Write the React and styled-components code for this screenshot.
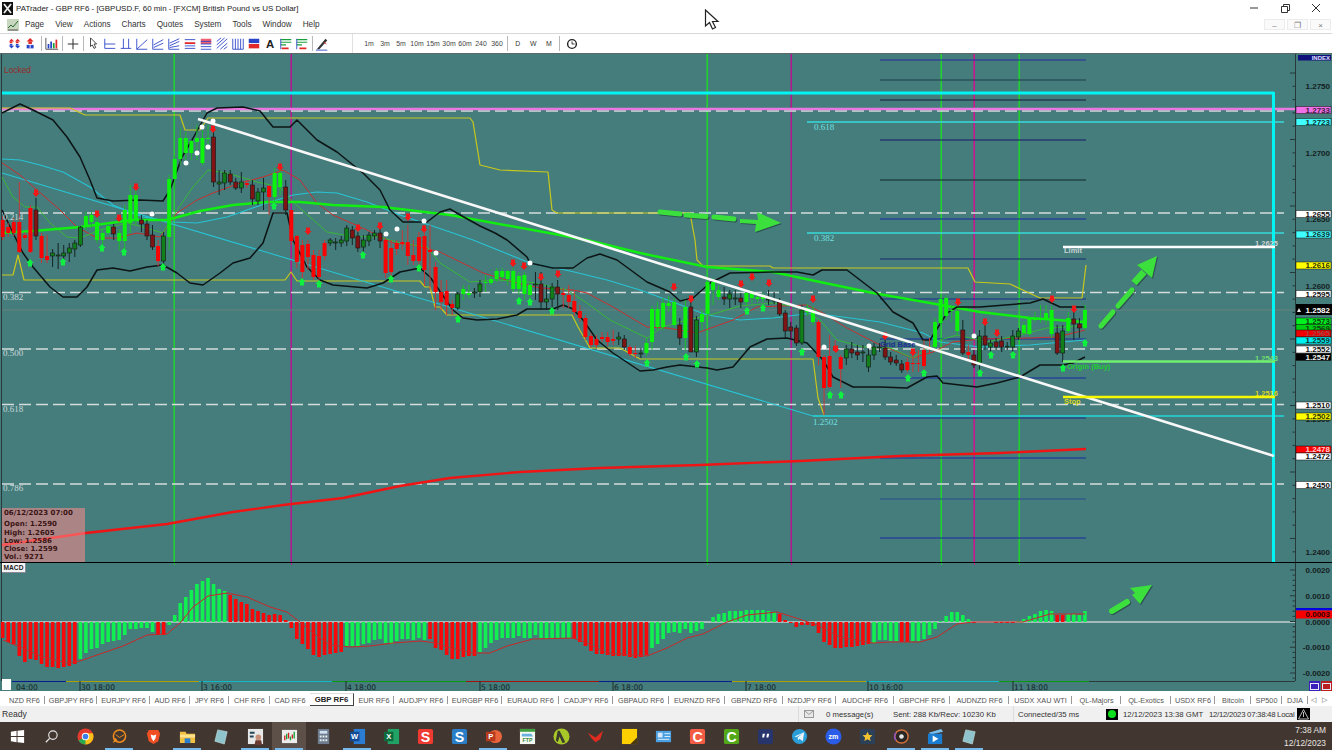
import React from 'react';
import styled, {createGlobalStyle} from 'styled-components';

const GlobalStyle = createGlobalStyle`
  html, body {
    margin: 0;
    padding: 0;
    width: 1332px;
    height: 750px;
    overflow: hidden;
    background: #fff;
    font-family: "Liberation Sans", Arial, sans-serif;
  }
`

const TEAL = '#457c7c';

// pixel coords of the drawn series, viewBox of the svg == page coords
const candles = [
  ['R',220,237,216,240],['R',227,233,223,237],['R',222,233,218,236],['R',222,252,182,253],['R',235,238,232,240],
  ['R',208,252,205,253],['r',210,236,198,240],['R',236,258,233,263],['R',256,260,235,263],['g',253,256,249,267],
  ['g',255,256,243,269],['g',253,256,245,263],['g',248,253,243,262],['g',243,249,240,257],['g',227,245,226,247],
  ['G',216,227,212,230],['G',215,222,212,228],['G',222,240,218,243],['G',233,240,230,245],['G',226,233,224,235],
  ['r',227,234,224,240],['G',233,241,229,250],['G',210,241,205,251],['G',195,223,185,233],['G',195,220,190,225],
  ['r',220,224,215,232],['r',224,236,220,240],['r',235,247,225,250],['R',246,261,240,266],['g',236,261,232,265],
  ['G',179,237,175,250],['G',159,179,155,190],['G',138,159,128,165],['G',138,153,132,160],['G',141,153,140,160],
  ['G',138,142,125,160],['G',138,163,130,165],['G',138,139,125,150],['r',137,182,130,187],['g',182,184,170,195],
  ['g',173,183,170,190],['r',174,182,170,185],['r',182,188,178,190],['g',182,188,172,193],['R',183,185,180,188],
  ['r',185,199,180,205],['g',192,201,188,205],['g',188,192,178,210],['R',186,197,185,215],['G',173,197,168,203],
  ['G',173,187,170,195],['r',187,210,180,215],['R',210,241,210,245],['R',236,262,235,268],['R',245,272,240,278],
  ['R',244,257,240,270],['R',255,277,250,280],['R',256,277,250,280],['R',243,256,240,260],['g',240,243,238,246],
  ['g',242,243,238,250],['g',240,243,236,247],['g',228,241,225,246],['r',230,238,226,245],['r',236,248,232,252],
  ['g',240,247,235,252],['g',235,241,232,246],['g',233,236,230,240],['r',233,241,228,248],['R',240,273,238,278],
  ['R',248,272,240,278],['R',243,249,240,255],['R',242,244,230,250],['R',242,256,225,265],['R',255,261,240,265],
  ['R',237,261,232,265],['R',236,270,225,286],['R',250,252,225,290],['R',267,292,262,310],['R',292,302,280,310],
  ['R',291,305,280,315],['R',304,308,300,315],['g',294,308,292,310],['G',289,294,285,300],['G',293,295,285,298],
  ['g',292,293,288,298],['g',284,292,280,297],['G',282,283,275,292],['G',279,283,276,285],['G',271,279,268,282],
  ['G',271,277,268,280],['G',271,279,270,285],['G',271,289,268,292],['G',276,289,272,295],['G',275,294,272,300],
  ['G',285,295,282,300],['g',284,285,272,300],['r',284,302,272,310],['g',299,302,285,310],['g',287,299,283,310],
  ['r',287,294,280,310],['R',293,295,288,308],['R',295,302,285,308],['R',301,312,290,316],['R',311,318,305,322],
  ['R',318,337,315,340],['R',336,345,333,348],['R',339,345,335,348],['R',337,339,332,342],['R',337,342,332,346],
  ['R',339,341,330,345],['g',337,339,332,345],['r',339,347,335,350],['R',347,354,345,356],['R',353,354,346,358],
  ['g',353,354,348,358],['G',343,353,338,356],['G',309,342,306,350],['G',309,327,302,330],['G',303,327,298,330],
  ['G',303,306,296,312],['G',302,325,298,328],['r',325,338,318,345],['G',307,338,300,350],['r',307,352,300,352],
  ['g',320,352,316,357],['G',314,322,310,330],['G',282,314,280,316],['G',282,290,278,305],['G',290,297,285,300],
  ['r',297,299,287,305],['g',294,299,290,308],['g',298,299,290,305],['r',298,302,293,308],['G',293,302,290,305],
  ['G',293,298,290,303],['G',297,299,293,302],['G',297,299,293,302],['g',299,300,290,305],['g',300,301,292,304],
  ['r',302,314,298,316],['r',313,331,310,338],['r',327,331,322,338],['r',328,343,325,346],['g',310,343,305,345],
  ['G',308,312,304,316],['G',310,322,306,325],['R',322,357,320,365],['R',357,388,355,415],['R',356,387,335,388],
  ['R',346,351,340,352],['R',357,369,355,388],['g',349,358,345,365],['r',349,353,342,358],['r',352,355,345,360],
  ['g',352,353,345,362],['g',355,367,348,372],['g',347,355,343,360],['g',347,348,343,352],['r',348,357,340,360],
  ['r',357,362,352,365],['r',360,363,355,366],['r',364,370,360,373],['R',362,370,358,372],['R',363,364,350,372],
  ['R',363,364,350,372],['R',350,366,340,370],['R',348,349,338,354],['G',322,347,318,350],['G',299,323,295,325],
  ['G',298,316,295,320],['G',310,311,305,322],['G',311,331,308,335],['r',330,353,320,355],['R',352,355,345,360],
  ['r',355,365,350,368],['g',336,364,330,370],['r',336,345,325,350],['g',343,347,340,352],['r',342,347,338,350],
  ['r',341,347,336,352],['g',346,347,342,350],['g',336,347,330,352],['g',331,337,328,340],['G',325,333,322,335],
  ['G',318,334,316,336],['G',318,320,312,322],['G',318,320,305,323],['G',313,320,305,325],['G',310,334,306,338],
  ['r',333,353,325,355],['g',331,353,325,362],['G',318,331,312,333],['r',319,324,310,340],['r',324,328,318,338],
  ['G',310,328,305,330],
];

const upperBand = [[2,113],[20,104],[33,110],[53,120],[67,137],[80,157],[90,180],[97,198],[113,201],[140,200],[163,201],[170,190],[182,157],[192,140],[207,113],[217,108],[243,107],[260,111],[273,127],[290,127],[297,120],[317,140],[337,152],[363,173],[380,190],[390,210],[403,222],[427,222],[440,212],[450,209],[462,216],[480,226],[495,233],[507,240],[527,257],[530,263],[553,268],[573,268],[587,258],[600,254],[617,260],[647,282],[670,292],[680,301],[693,298],[710,283],[730,273],[773,272],[797,272],[813,275],[822,270],[847,270],[877,293],[893,312],[913,323],[923,340],[930,340],[947,313],[957,307],[980,307],[1030,303],[1043,299],[1060,307],[1085,307]];
const lowerBand = [[2,210],[13,233],[23,253],[33,267],[50,287],[63,297],[77,297],[87,287],[97,270],[113,268],[130,271],[147,267],[163,265],[177,273],[190,283],[203,285],[220,273],[233,263],[250,258],[263,243],[273,213],[287,213],[293,240],[307,267],[320,280],[333,285],[367,288],[383,283],[400,272],[420,268],[430,277],[453,310],[463,318],[477,320],[497,319],[517,315],[527,309],[553,309],[563,305],[573,309],[583,320],[597,340],[613,353],[640,371],[653,370],[667,367],[680,365],[707,368],[717,370],[733,367],[750,347],[767,339],[787,338],[807,343],[823,360],[833,377],[853,387],[880,387],[907,388],[927,377],[937,376],[943,383],[977,387],[997,383],[1020,377],[1040,365],[1063,365],[1073,363],[1085,357]];
const yellowTop = [[2,108],[70,108],[85,115],[180,115],[185,130],[200,130],[208,118],[470,118],[473,122],[480,165],[500,170],[548,172],[552,210],[557,213],[690,213],[695,240],[697,260],[703,266],[770,266],[773,268],[968,268],[975,282],[1010,284],[1040,298],[1082,298],[1086,265]];
const yellowLow = [[2,275],[13,275],[18,255],[24,280],[285,280],[291,272],[297,281],[420,281],[425,287],[430,287],[435,307],[440,307],[447,315],[572,315],[578,327],[590,348],[620,348],[640,359],[813,359],[818,398],[824,415]];
const cyanCurve = [[2,159],[20,160],[40,165],[63,172],[90,187],[113,205],[143,217],[173,222],[197,223],[227,217],[267,203],[293,195],[317,192],[337,193],[367,202],[400,215],[450,232],[473,240],[530,263],[570,271],[607,280],[640,290],[673,302],[707,315],[740,320],[773,318],[813,313],[880,322],[923,333],[940,342],[980,347],[1030,345],[1085,340]];
const redCurve = [[2,163],[20,175],[37,190],[60,210],[77,227],[97,238],[117,238],[137,233],[160,237],[177,213],[197,200],[213,193],[240,183],[263,177],[283,170],[300,180],[317,203],[333,215],[367,230],[393,243],[413,245],[440,252],[483,273],[513,282],[540,288],[573,290],[587,293],[613,307],[647,327],[667,328],[697,333],[733,320],[757,307],[807,305],[823,313],[847,328],[880,345],[913,358],[933,352],[953,342],[980,339],[1030,338],[1057,337],[1085,330]];
const greenCurve = [[2,177],[13,197],[25,207],[37,207],[50,223],[67,237],[80,238],[100,230],[127,223],[143,227],[163,233],[177,210],[193,187],[208,170],[227,173],[257,182],[280,187],[293,202],[310,217],[327,232],[350,236],[380,237],[400,243],[427,247],[440,263],[470,282],[497,280],[530,282],[567,290],[587,303],[610,320],[647,338],[663,327],[687,320],[710,315],[740,306],[773,303],[797,307],[820,320],[837,340],[863,347],[890,348],[913,358],[940,340],[957,335],[987,342],[1020,335],[1047,328],[1067,327],[1085,325]];
const thickGreen = [[2,233],[33,231],[80,227],[133,220],[167,220],[200,211],[233,205],[267,202],[300,202],[333,205],[383,207],[450,215],[587,240],[640,253],[707,267],[773,272],[820,282],[873,293],[930,303],[980,312],[1030,318],[1085,322]];
const thickRed = [[2,545],[86,533],[167,524],[233,512],[283,505],[343,498],[400,486],[450,478],[520,472],[600,468],[700,465],[800,461],[900,456],[1000,453],[1086,449]];
const signalLine = [[3,640],[20,647],[43,657],[67,663],[80,661],[97,655],[123,646],[147,635],[167,634],[180,623],[193,607],[208,596],[227,593],[247,597],[270,607],[287,612],[300,622],[313,633],[330,645],[350,647],[370,646],[393,643],[420,641],[437,643],[447,647],[473,653],[490,653],[507,646],[533,639],[573,638],[587,643],[607,653],[647,656],[667,648],[687,638],[703,634],[727,622],[747,615],[777,612],[793,617],[817,625],[840,637],[873,643],[890,642],[920,642],[937,637],[957,624],[973,622],[1023,622],[1050,614],[1085,614]];

const redDown = [[36,193],[97,214],[119,218],[136,187],[213,129],[280,167],[308,231],[358,228],[380,226],[408,217],[424,229],[513,263],[524,266],[541,277],[558,274],[674,287],[691,299],[741,284],[752,277],[769,283],[813,299],[836,349],[885,336],[913,352],[958,302],[985,322],[997,333],[1052,299],[1074,309]];
const greenUp = [[30,263],[63,262],[102,248],[124,252],[163,267],[274,206],[302,282],[319,284],[363,255],[391,279],[419,268],[458,319],[519,301],[530,302],[552,311],[647,363],[686,357],[697,364],[747,311],[763,308],[802,352],[830,395],[841,395],[908,378],[924,373],[980,373],[991,355],[1013,355],[1063,368],[1085,343]];
const whiteDots = [[152,214],[186,163],[197,153],[208,147],[202,127],[213,121],[386,234],[397,229],[424,221],[436,253],[530,263],[824,347],[869,346],[974,336]];

// macd histogram, px below zero line (negative = above), colour runs in bar order
const macdRuns = [
  ['R',[16,20,22,34,40,37,38,42,45,45,46,45,44,42]],
  ['G',[37,31,27,26,22,20,19,18,13,7,7,6,6,10]],
  ['R',[13,13]],
  ['G',[3,-7,-19,-25,-32,-38,-41,-44,-38,-33,-31]],
  ['R',[-27,-23,-20,-18,-13,-11,-9,-7,-8,-7,-2,6,17,22,27,33,35,33,32,31,30]],
  ['G',[24,24,24,22,21,18,17,21,22,19,17,17,18,16,18]],
  ['R',[17,26,28,33,37,37,35,34,34]],
  ['G',[30,26,21,18,16,16,16,14,16,16,13,16,17,16,16,16,16]],
  ['R',[17,20,24,29,32,32,33,34,34,34,35,36,35,33]],
  ['G',[26,22,17,11,10,11,7,11,9,7,0,-5,-8,-9,-11,-11,-11,-12,-12,-12,-12,-11,-10]],
  ['R',[-8,-2,1,5,3,3,4,11,20,23,26,26,25,25,24,23,22]],
  ['G',[21,18,18,19,19]],
  ['R',[20,20]],
  ['G',[19,19,17,13,7,-1,-6,-10,-10,-7,-3]],
  ['R',[1,0,0,0,1,1,1,1]],
  ['G',[-1,-3,-6,-8,-11,-12,-11]],
  ['R',[-7,-7]],
  ['G',[-8,-8,-7,-11]],
];
const macdBars = macdRuns.flatMap(([k, vals]) => vals.map((v) => [k, v]));

const sessionStrip = [[12,66,'#0a1a90'],[66,199,'#b0a000'],[199,332,'#10b8c8'],[332,466,'#0a9a10'],[466,599,'#a81010'],[599,732,'#0a1a90'],[732,866,'#b0a000'],[866,999,'#10b8c8'],[999,1089,'#0a9a10'],[1089,1295,'#2c3c3c']];

const timeLabels = [[16,'04:00'],[81,'30 18:00',1],[203,'3 16:00',1],[347,'4 18:00',1],[481,'5 18:00',1],[614,'6 18:00',1],[747,'7 18:00',1],[869,'10 16:00',1],[1014,'11 18:00',1]];

const priceTags = [
  {y:110,t:'1.2733',bg:'#f070e8',fg:'#402040'},
  {y:122,t:'1.2723',bg:'#40ffff',fg:'#103030'},
  {y:214,t:'1.2655',bg:'#ffffff',fg:'#101010'},
  {y:234.5,t:'1.2639',bg:'#40ffff',fg:'#103030'},
  {y:265.5,t:'1.2616',bg:'#ffff00',fg:'#303000'},
  {y:294,t:'1.2595',bg:'#ffffff',fg:'#101010'},
  {y:321.5,t:'1.2573',bg:'#00f020',fg:'#104010'},
  {y:328,t:'1.2569',bg:'#00d010',fg:'#104010'},
  {y:333.5,t:'1.2565',bg:'#f00000',fg:'#a04040'},
  {y:340.5,t:'1.2559',bg:'#00f0f0',fg:'#103030'},
  {y:349.5,t:'1.2552',bg:'#ffffff',fg:'#101010'},
  {y:357,t:'1.2547',bg:'#000000',fg:'#f0f0f0'},
  {y:405.5,t:'1.2510',bg:'#ffffff',fg:'#101010'},
  {y:416.5,t:'1.2502',bg:'#ffff00',fg:'#303000'},
  {y:449.5,t:'1.2478',bg:'#ff0000',fg:'#ffd0d0'},
  {y:456.5,t:'1.2472',bg:'#ffffff',fg:'#101010'},
  {y:485,t:'1.2450',bg:'#ffffff',fg:'#101010'},
];
const plainPrices = [[86,'1.2750'],[153,'1.2700'],[219,'1.2650'],[286,'1.2600'],[419,'1.2500'],[552,'1.2400']];
const macdScale = [[570,'0.0020'],[596,'0.0010'],[622,'0.0000'],[647,'-0.0010'],[673,'-0.0020']];

const gridLevels = [[60,'#2a2aa0'],[80,'#1c3c4c'],[100,'#101c3c'],[140,'#18186a'],[180,'#102828'],[219,'#1a2aa0'],[259,'#14286c'],[299,'#1a2a8a'],[339,'#1a2a9a'],[378,'#1a2aa0'],[418,'#1a2a8a'],[458,'#1a2aa0'],[499,'#2a4a90'],[538,'#1a2aa0']];
const dashLevels = [111,213,292.5,349,404.5,484];
const fibLabels = [[3,220,'0.214'],[3,300,'0.382'],[3,356,'0.500'],[3,412,'0.618'],[3,491,'0.786']];
const verticals = [[174.5,'#22d034'],[291.5,'#b01c90'],[707.5,'#22d034'],[791.5,'#b01c90'],[941.5,'#22d034'],[974.5,'#c81890'],[1019.5,'#22d034']];

const tabs = [['NZD RF6',41],['GBPJPY RF6',52],['EURJPY RF6',53],['AUD RF6',40],['JPY RF6',39],['CHF RF6',41],['CAD RF6',40],['GBP RF6',44,true],['EUR RF6',40],['AUDJPY RF6',54],['EURGBP RF6',54],['EURAUD RF6',57],['CADJPY RF6',54],['GBPAUD RF6',56],['EURNZD RF6',56],['GBPNZD RF6',58],['NZDJPY RF6',53],['AUDCHF RF6',58],['GBPCHF RF6',56],['AUDNZD RF6',59],['USDX XAU WTI',63],['QL-Majors',49],['QL-Exotics',50],['USDX RF6',44],['Bitcoin',36],['SP500',31],['DJIA',26]];
const menuItems = ['Page','View','Actions','Charts','Quotes','System','Tools','Window','Help'];
const timeframes = ['1m','3m','5m','10m','15m','30m','60m','240','360'];
const taskbarIcons = ['win','search','chrome','mail','brave','folder','crystal','shot','pat','calc','word','excel','sred','sblue','ppt','ftp','ngreen','bird','sticky','card','cred','cgreen','quote','telegram','zoom','star','disc','play','crystal'];
const openIcons = [3,5,7,8,10,14,26,27,28];

const linePath = (pts) => 'M' + pts.map((p) => p.join(',')).join('L');
const candleX = (i) => 2.67 + i * 5.55;

const Screen = styled.div`
  width: 1332px;
  height: 750px;
  display: flex;
  flex-direction: column;
  position: relative;
  overflow: hidden;
  background: #fff;
`
const TitleBar = styled.div`
  height: 16px;
  display: flex;
  align-items: center;
  padding: 0 1px 0 2px;
  font-size: 7.95px;
  color: #222;
`
const AppLogo = styled.svg`
  width: 11px;
  height: 13px;
  margin-right: 3px;
`
const TitleText = styled.span`
  flex: 1;
`
const WinButton = styled.div`
  width: 31px;
  height: 16px;
  display: flex;
  align-items: center;
  justify-content: center;
`
const MenuBar = styled.div`
  height: 17px;
  border-bottom: 1px solid #d8d8d8;
  display: flex;
  align-items: center;
  padding-left: 7px;
  font-size: 8.2px;
  color: #333;
`
const MenuIcon = styled.svg`
  width: 12px;
  height: 12px;
  margin-right: 6px;
`
const MenuItem = styled.span`
  margin-right: 11px;
`
const MdiButtons = styled.div`
  margin-left: auto;
  margin-right: 1px;
  display: flex;
  gap: 2px;
`
const MdiButton = styled.div`
  width: 21px;
  height: 11px;
  border: 1px solid #ececec;
  background: #fafafa;
  color: #777;
  font-size: 8px;
  line-height: 11px;
  text-align: center;
  box-sizing: border-box;
`
const ToolBar = styled.div`
  height: 20px;
  box-sizing: border-box;
  border-bottom: 1px solid #5a6a6a;
  display: flex;
  align-items: center;
  padding-left: 7px;
`
const ToolCell = styled.div`
  width: 16px;
  height: 16px;
  display: flex;
  align-items: center;
  justify-content: center;
  font-size: 6.9px;
  color: #444;
  flex: none;
`
const ToolSep = styled.div`
  width: 1px;
  height: 15px;
  background: #b8b8b8;
  flex: none;
  margin: 0 ${(p) => p.$m || 2}px 0 2px;
`
const ToolGroupGap = styled.div`
  width: 1px;
  height: 19px;
  background: #e0e0e0;
  margin: 0 8px 0 22px;
  flex: none;
`
const ToolLetter = styled(ToolCell)`
  width: 15.5px;
  color: #333;
`
const Pane = styled.div`
  display: flex;
  height: ${(p) => p.$h}px;
  background: ${TEAL};
  flex: none;
`
const PaneRule = styled.div`
  height: 1px;
  background: #000;
  flex: none;
`
const PlotArea = styled.div`
  position: relative;
  width: 1295px;
  height: 100%;
  flex: none;
`
const ChartSvg = styled.svg`
  display: block;
  width: 100%;
  height: 100%;
`
const AxisSvg = styled.svg`
  display: block;
  width: 37px;
  height: 100%;
  flex: none;
`
const Curve = styled.path`
  fill: none;
  stroke: ${(p) => p.$c};
  stroke-width: ${(p) => p.$w || 1};
  stroke-linejoin: round;
`
const Rule = styled.line`
  stroke: ${(p) => p.$c};
  stroke-width: ${(p) => p.$w || 1};
  ${(p) => p.$dash && 'stroke-dasharray: 12 5;'}
`
const wickColors = {G: '#18c028', R: '#c83838', g: '#142424', r: '#142424'};
const bodyColors = {G: '#0cf40c', R: '#f80404', g: '#10801a', r: '#801414'};
const Wick = styled.line`
  stroke: ${(p) => wickColors[p.$k]};
  stroke-width: 1;
`
const CandleBody = styled.rect`
  fill: ${(p) => bodyColors[p.$k]};
  stroke: ${(p) => (p.$k === 'g' || p.$k === 'r' ? '#141414' : 'none')};
  stroke-width: .6;
`
const Marker = styled.path`
  fill: ${(p) => p.$c};
`
const Dot = styled.circle`
  fill: #fff;
`
const MacdBar = styled.rect`
  fill: ${(p) => (p.$k === 'G' ? '#10f050' : '#f80808')};
`
const FibText = styled.text`
  font-family: "Liberation Serif", serif;
  font-size: ${(p) => p.$s || 9}px;
  fill: ${(p) => p.$c || '#c8dada'};
`
const TradeText = styled.text`
  font-family: "Liberation Sans", sans-serif;
  font-size: 7.5px;
  font-weight: bold;
  fill: ${(p) => p.$c};
`
const ArrowShape = styled.g`
  filter: drop-shadow(1px 1px 0.6px rgba(0, 0, 0, .35));
`
const AxisLabel = styled.text`
  font-family: "Liberation Sans", sans-serif;
  font-size: ${(p) => p.$s || 8}px;
  font-weight: bold;
  text-anchor: end;
  dominant-baseline: central;
  fill: ${(p) => p.$c || '#142020'};
`
const LockedNote = styled.div`
  position: absolute;
  left: 4px;
  top: 11px;
  font-size: 8.4px;
  color: #9a2a2a;
`
const InfoBox = styled.div`
  position: absolute;
  left: 2px;
  top: 454px;
  width: 83px;
  height: 54px;
  box-sizing: border-box;
  padding: 1px 2px;
  background: rgba(255, 140, 140, .55);
  font-family: "DejaVu Sans", sans-serif;
  font-size: 7px;
  font-weight: bold;
  line-height: 8.3px;
  color: #3a1414;
`
const InfoHead = styled.div`
  margin-bottom: 3px;
`
const MacdTag = styled.div`
  position: absolute;
  left: 2px;
  top: 0;
  width: 23px;
  height: 9px;
  background: #f4f4f4;
  border-right: 1px solid #889;
  border-bottom: 1px solid #889;
  font-size: 6.6px;
  font-weight: bold;
  line-height: 9px;
  text-align: center;
  color: #222;
`
const TimeRow = styled.div`
  height: 10px;
  display: flex;
  background: ${TEAL};
  flex: none;
`
const TimePlot = styled.div`
  position: relative;
  width: 1295px;
  flex: none;
`
const TimeText = styled.text`
  font-family: "DejaVu Sans", sans-serif;
  font-size: 7.6px;
  fill: #142424;
`
const BlankCorner = styled.div`
  position: absolute;
  left: 2px;
  top: -2px;
  width: 9px;
  height: 11px;
  background: #fff;
`
const CornerButtons = styled.div`
  margin-left: auto;
  display: flex;
  gap: 1px;
`
const CornerButton = styled.div`
  width: 11px;
  height: 10px;
  background: ${(p) => p.$c};
  display: flex;
  align-items: center;
  justify-content: center;
`
const CornerGlyph = styled.div`
  width: 7px;
  height: 5px;
  border: 1px solid #e8e8ff;
`
const TabBar = styled.div`
  height: 15px;
  box-sizing: border-box;
  padding: 3px 0 0 4px;
  display: flex;
  align-items: stretch;
  background: #fff;
  flex: none;
`
const Tab = styled.div`
  width: ${(p) => p.$w}px;
  flex: none;
  box-sizing: border-box;
  display: flex;
  align-items: center;
  justify-content: center;
  font-size: ${(p) => (p.$active ? 7.8 : 7.3)}px;
  font-weight: ${(p) => (p.$active ? 'bold' : 'normal')};
  color: ${(p) => (p.$active ? '#222' : '#555')};
  white-space: nowrap;
  position: relative;
  ${(p) => p.$active && `
    border-right: 1px solid #444;
    border-bottom: 1px solid #444;
    border-top: 1px solid #ddd;
    margin-top: -1px;
  `}
  ${(p) => !p.$active && !p.$plain && `
    &::after {
      content: '';
      position: absolute;
      right: 0;
      top: 2px;
      height: 8px;
      border-right: 1px solid #999;
    }
  `}
`
const TabArrows = styled.div`
  display: flex;
  align-items: center;
  gap: 6px;
  padding-left: 3px;
  font-size: 6.5px;
  color: #555;
`
const StatusBar = styled.div`
  height: 16px;
  display: flex;
  align-items: center;
  background: #f0f0f0;
  font-size: 7.8px;
  color: #333;
  flex: none;
`
const ReadyText = styled.span`
  width: 798px;
  padding-left: 2px;
  box-sizing: border-box;
  font-size: 8.6px;
`
const StatusCell = styled.div`
  width: ${(p) => p.$w}px;
  padding-left: ${(p) => p.$pad || 0}px;
  box-sizing: border-box;
  height: 100%;
  display: flex;
  align-items: center;
  flex: none;
  white-space: nowrap;
  ${(p) => p.$tight && 'letter-spacing: -.28px;'}
  ${(p) => p.$line && 'border-left: 1px solid #dcdcdc;'}
`
const LedBox = styled.div`
  width: 12px;
  height: 11px;
  background: #000;
  display: flex;
  align-items: center;
  justify-content: center;
`
const Led = styled.div`
  width: 8px;
  height: 8px;
  border-radius: 50%;
  background: #10e020;
`
const TaskBar = styled.div`
  height: 28px;
  background: #423730;
  display: flex;
  padding-left: 0;
  flex: none;
`
const TaskSlot = styled.div`
  width: 34px;
  height: 28px;
  flex: none;
  box-sizing: border-box;
  display: flex;
  align-items: center;
  justify-content: center;
  position: relative;
  background: ${(p) => (p.$active ? '#5c5048' : 'transparent')};
  ${(p) => p.$open && `
    &::after {
      content: '';
      position: absolute;
      left: 3px;
      right: 3px;
      bottom: 0;
      height: 2px;
      background: #76b9ed;
    }
  `}
`
const TaskSvg = styled.svg`
  width: 17px;
  height: 17px;
`
const Clock = styled.div`
  margin-left: auto;
  padding-right: 6px;
  display: flex;
  flex-direction: column;
  justify-content: center;
  gap: 3px;
  align-items: flex-end;
  font-size: 8.4px;
  color: #e8e4e0;
`
const CursorOverlay = styled.svg`
  position: absolute;
  left: 704px;
  top: 9px;
  width: 16px;
  height: 22px;
`
const IconText = styled.text`
  font-family: "Liberation Sans", sans-serif;
  font-weight: bold;
  text-anchor: middle;
  font-size: ${(p) => p.$s}px;
  fill: ${(p) => p.$c || '#fff'};
`

const BL = '#2a44c8';
const RD = '#e02828';
const GN = '#18a038';

const toolIcons = [
  <><path d="M4 2l3 3H1zM11 2l3 3H8z" fill={RD}/><path d="M2 5h3v2H2zM9 5h3v2H9z" fill={RD}/><path d="M4 13l3-3H1zM11 13l3-3H8z" fill={BL}/><path d="M2 8h3v2H2zM9 8h3v2H9z" fill={BL}/></>,
  <><path d="M7 1l4 4H3z" fill={RD}/><path d="M5 5h4v3H5z" fill={RD}/><path d="M3 13h8V9H3z" fill={BL}/><path d="M7 8v5" stroke="#fff"/></>,
];
const chartIcon = <><path d="M1 1v13h14" stroke="#444" fill="none"/><path d="M3 13V8h2v5zM6 13V5h2v8z" fill={BL}/><path d="M9 13V7h2v6z" fill={GN}/><path d="M12 13V3h2v10z" fill={RD}/></>;
const crossIcon = <path d="M8 2v12M2 8h12" stroke="#333" strokeWidth="1.2"/>;
const drawIcons = [
  <path d="M4 1v10l2-2 2 4 2-1-2-4h3z" fill="#fff" stroke="#333"/>,
  <path d="M2 2v11M2 8h12M2 13h12" stroke={BL} fill="none"/>,
  <path d="M2 13h12M5 2v11M11 2v11" stroke={BL} fill="none"/>,
  <path d="M2 14h12M2 14L14 3M2 2v12" stroke={BL} fill="none"/>,
  <path d="M2 14h12M2 2v12M3 12l11-5M3 9l11-6" stroke={BL} fill="none"/>,
  <path d="M2 14h12M2 2v12M3 12l11-2M3 10l11-5M3 7l11-5" stroke={BL} fill="none"/>,
  <><path d="M2 3h12M2 13h12" stroke={BL}/><path d="M2 6h12v2H2z" fill={RD}/><path d="M2 9h12v2H2z" fill="#88a0e8"/></>,
  <><path d="M2 2h12v6H2z" fill="#f06070"/><path d="M2 5h12M2 8h12M2 11h12M2 14h12" stroke={BL}/></>,
  <path d="M2 5l5-4M2 9l9-8M2 13l12-11M6 14l8-7M10 14l4-3" stroke={BL} fill="none"/>,
  <path d="M2 2v12M5 2v12M8 2v12M11 2v12M14 2v12M2 14h12" stroke={BL} fill="none"/>,
  <><path d="M2 2h12v5H2z" fill={BL}/><path d="M2 8h12v5H2z" fill={RD}/></>,
  <IconText x="8" y="13" $s={13} $c="#222">A</IconText>,
  <><path d="M2 3h12M2 6h12M2 9h6" stroke={GN} strokeWidth="1.3"/><path d="M2 2v12" stroke={BL}/><path d="M3 12h8v2H3z" fill={RD}/></>,
  <><path d="M2 3h12M2 6h12M2 9h6" stroke={GN} strokeWidth="1.3"/><path d="M2 2v12" stroke={BL}/><path d="M5 12h8v2H5z" fill={RD}/></>,
];
const brushIcon = <><path d="M2 14L12 2l2 2L5 14z" fill="#333"/><path d="M1 15h13" stroke={BL}/><path d="M10 6l3 2" stroke={RD}/></>;
const clockIcon = <><circle cx="8" cy="8" r="5" fill="none" stroke="#222" strokeWidth="1.6"/><path d="M8 5v3h3" fill="none" stroke="#222"/></>;

const ToolIcon = ({children}) => (
  <ToolCell><svg width="14" height="14" viewBox="0 0 16 16">{children}</svg></ToolCell>
);

const taskIconArt = {
  win: <path d="M2 4l6-1v5.5H2zM9 3l7-1v6.5H9zM2 9.5h6V15l-6-1zM9 9.5h7V16l-7-1z" fill="#fff"/>,
  search: <><circle cx="10.5" cy="7.5" r="4.5" fill="none" stroke="#e6e6e6" strokeWidth="1.2"/><path d="M7 11l-4 4" stroke="#e6e6e6" strokeWidth="1.4"/></>,
  chrome: <><circle cx="9" cy="9" r="8.5" fill="#e33b2e"/><path d="M9 9L1.6 13.2A8.5 8.5 0 0 0 9 17.5L13.5 9z" fill="#2da94f"/><path d="M9 9l-0 8.5A8.5 8.5 0 0 0 16.7 5.5H9z" fill="#fbc116"/><circle cx="9" cy="9" r="4" fill="#fff"/><circle cx="9" cy="9" r="3" fill="#3a7fe8"/></>,
  mail: <><circle cx="9" cy="8.5" r="6.5" fill="none" stroke="#f08c1e" strokeWidth="1.6"/><path d="M4 10l-2 6 5-3" fill="#f08c1e"/><path d="M5 7l4 3 5-3" fill="none" stroke="#f08c1e"/></>,
  brave: <><path d="M4 2h10l2 4-2 8-5 3-5-3-2-8z" fill="#f04e23"/><path d="M6 7l3 1 3-1-1 4-2 3-2-3z" fill="#fff"/></>,
  folder: <><path d="M1 4h6l1 2h9v10H1z" fill="#f0c040"/><path d="M1 7h16v3H1z" fill="#ffe490"/><path d="M6 11h6v5H6z" fill="#2a7fd0"/></>,
  crystal: <path d="M5 2l10 2-3 13-10-3z" fill="#8fc4cc" stroke="#c8e8ea" strokeWidth=".6"/>,
  shot: <><path d="M1 1h16v16H1z" fill="#e8e8e8"/><path d="M3 4h5v2H3zM3 8h4v2H3z" fill="#245"/><circle cx="12" cy="10" r="3" fill="#c89078"/><path d="M8 18l1-5h6l1 5z" fill="#6a3a30"/></>,
  pat: <><path d="M1 2h16v14H1z" fill="#ececec"/><path d="M4 8v5M8 5v6M12 7v4" stroke="#d02020" strokeWidth="1.4"/><path d="M6 6v6M10 9v4M14 4v7" stroke="#18a038" strokeWidth="1.4"/></>,
  calc: <><path d="M3 1h12v16H3z" fill="#6c7c8c"/><path d="M5 3h8v3H5z" fill="#cfe0ee"/><path d="M5 8h2v2H5zM8 8h2v2H8zM11 8h2v2h-2zM5 12h2v2H5zM8 12h2v2H8zM11 12h2v2h-2z" fill="#e8eef4"/></>,
  word: <><path d="M5 1h12v16H5z" fill="#2b7cd3"/><path d="M1 4h10v10H1z" fill="#124a98"/><IconText x="6" y="12" $s={8}>W</IconText></>,
  excel: <><path d="M5 1h12v16H5z" fill="#21a366"/><path d="M1 4h10v10H1z" fill="#0e6a3c"/><IconText x="6" y="12" $s={8}>X</IconText></>,
  sred: <><rect x="1" y="1" width="16" height="16" rx="2" fill="#ee3a30"/><IconText x="9" y="14.5" $s={15}>S</IconText></>,
  sblue: <><rect x="1" y="1" width="16" height="16" rx="2" fill="#2a7ec8"/><IconText x="9" y="14.5" $s={15}>S</IconText></>,
  ppt: <><circle cx="11" cy="9" r="7" fill="#e8643c"/><path d="M1 4h10v10H1z" fill="#b83a1c"/><IconText x="6" y="12" $s={8}>P</IconText></>,
  ftp: <><path d="M1 1h16v16H1z" fill="#f4f8f0"/><path d="M1 1h16v3H1z" fill="#40a040"/><path d="M3 6h10l2 3H3z" fill="#68b0e0"/><IconText x="9" y="15" $s={5.5} $c="#3a8a3a">FTP</IconText></>,
  ngreen: <><circle cx="9" cy="9" r="8.5" fill="#a8c828"/><path d="M5 3l2 0 6 12-3 1-3-7-2 6-2-2z" fill="#3a3a30"/></>,
  bird: <path d="M1 5l8 5 8-7-3 9-5 3-4-4z" fill="#e02c20"/>,
  sticky: <><path d="M1 1h16v16H1z" fill="#ffd000"/><path d="M17 10v7h-7z" fill="#4a3a10"/></>,
  card: <><path d="M1 3h16v12H1z" fill="#4aa0e0"/><path d="M3 5h5v5H3z" fill="#d8e8f8"/><path d="M10 6h6M10 9h6M3 12h12" stroke="#e0f0ff"/></>,
  cred: <><rect x="1" y="1" width="16" height="16" rx="2" fill="#f25c44"/><IconText x="9" y="14.5" $s={15}>C</IconText></>,
  cgreen: <><rect x="1" y="1" width="16" height="16" rx="2" fill="#52a818"/><IconText x="9" y="14.5" $s={15}>C</IconText></>,
  quote: <><rect x="1" y="1" width="16" height="16" rx="3" fill="#28346c"/><path d="M6 6h2.5l-1 4H5.5zM10.5 6H13l-1 4h-2z" fill="#fff"/></>,
  telegram: <><circle cx="9" cy="9" r="8" fill="#2a9ed8"/><path d="M3.5 9L14 4.5 12.5 14 9 11.5 7.5 13l-.5-3 5-4-6 3.5z" fill="#e8f4fc"/></>,
  zoom: <><circle cx="9" cy="9" r="8.5" fill="#2a5ce8"/><IconText x="9" y="11.5" $s={7.5}>zm</IconText></>,
  star: <><rect x="1" y="1" width="16" height="16" rx="2" fill="#2c4058"/><path d="M9 4l1.6 3.4 3.6.4-2.7 2.4.8 3.6L9 12l-3.3 1.8.8-3.6L3.800 7.800l3.6-.4z" fill="#f4c430"/></>,
  disc: <><circle cx="9" cy="9" r="7" fill="#2a2624" stroke="#d0703c" strokeWidth="1.6"/><path d="M3 13a7 7 0 0 1 0-8" fill="none" stroke="#8a50c0" strokeWidth="1.6"/><circle cx="9" cy="9" r="2.400" fill="#e8e8e8"/></>,
  play: <><path d="M2 5l13-4 2 3-13 3z" fill="#7ac0ec"/><path d="M1 6h15v11H1z" fill="#1a7cd0"/><path d="M6 8l6 3.500L6 15z" fill="#fff"/></>,
};

const upMarker = (x, y) => `M${x},${y - 4}L${x + 3.6},${y}H${x + 2}V${y + 3.5}H${x - 2}V${y}H${x - 3.6}Z`;
const downMarker = (x, y) => `M${x},${y + 4}L${x + 3.6},${y}H${x + 2}V${y - 3.5}H${x - 2}V${y}H${x - 3.6}Z`;

const PriceChart = () => (
  <ChartSvg viewBox="0 54 1295 508">
    <Rule x1="1.500" x2="1.500" y1="54" y2="562" $c="#2a3a3a"/>
    {verticals.map(([x, c]) => <Rule key={x} x1={x - 0.3} x2={x - 0.3} y1="54" y2="562" $c={c} $w={1.6}/>)}
    {gridLevels.map(([y, c]) => <Rule key={y} x1="880" x2="1086" y1={y} y2={y} $c={c}/>)}
    <Rule x1="2" x2="1295" y1="310" y2="310" $c="#68807a"/>
    {dashLevels.map((y) => <Rule key={y} x1="2" x2="1284" y1={y} y2={y} $c="#d4dcdc" $w={1.3} $dash/>)}
    <Rule x1="2" x2="1295" y1="109" y2="109" $c="#e878e0" $w={2.4}/>
    <Rule x1="807" x2="1284" y1="122" y2="122" $c="#38dada" $w={1.4}/>
    <Rule x1="807" x2="1284" y1="233" y2="233" $c="#38dada" $w={1.4}/>
    <Rule x1="813" x2="1284" y1="416" y2="416" $c="#20d8d8" $w={1.6}/>

    <Curve d={linePath(yellowTop)} $c="#c8c81c" $w={1.2}/>
    <Curve d={linePath(yellowLow)} $c="#c8c81c" $w={1.2}/>
    <Curve d={linePath(cyanCurve)} $c="#28c4d4" $w={1.1}/>
    <Rule x1="2" x2="813" y1="173" y2="416" $c="#28c4d4" $w={1.1}/>
    <Curve d={linePath(redCurve)} $c="#c83030" $w={1}/>
    <Curve d={linePath(greenCurve)} $c="#38b838" $w={1}/>
    <Curve d={linePath(thickGreen)} $c="#12ee12" $w={2.4}/>
    <Curve d={linePath(upperBand)} $c="#0c1414" $w={1.5}/>
    <Curve d={linePath(lowerBand)} $c="#0c1414" $w={1.5}/>
    <Curve d={linePath(thickRed)} $c="#f01414" $w={2.3}/>

    {candles.map(([k, top, bottom, hi, lo], i) => (
      <g key={i}>
        <Wick $k={k} x1={candleX(i)} x2={candleX(i)} y1={hi} y2={lo}/>
        <CandleBody $k={k} x={candleX(i) - 2} y={top} width="4" height={Math.max(bottom - top, 1)}/>
      </g>
    ))}
    {redDown.map(([x, y]) => <Marker key={`d${x}`} d={downMarker(x, y)} $c="#f01818"/>)}
    {greenUp.map(([x, y]) => <Marker key={`u${x}`} d={upMarker(x, y)} $c="#10f040"/>)}
    {whiteDots.map(([x, y]) => <Dot key={`w${x}`} cx={x} cy={y} r="2.500"/>)}

    <Rule x1="2" x2="1274" y1="93" y2="93" $c="#00f4f4" $w={3}/>
    <Rule x1="1273.500" x2="1273.500" y1="92" y2="562" $c="#00f4f4" $w={3}/>
    <Rule x1="198" x2="1274" y1="119" y2="456" $c="#f8f8f8" $w={2.6}/>

    <Rule x1="1063" x2="1275" y1="247" y2="247" $c="#fff" $w={2.6}/>
    <Rule x1="1063" x2="1275" y1="361.500" y2="361.500" $c="#70f070" $w={2.6}/>
    <Rule x1="1063" x2="1275" y1="397" y2="397" $c="#f8f800" $w={2.6}/>
    <TradeText x="1064" y="253" $c="#c8d4d4">Limit</TradeText>
    <TradeText x="1255" y="246" $c="#c8d4d4">1.2625</TradeText>
    <TradeText x="1067" y="369" $c="#20d030">Origin (Buy)</TradeText>
    <TradeText x="1255" y="361" $c="#70e070">1.2543</TradeText>
    <TradeText x="1064" y="404" $c="#d8d820">Stop</TradeText>
    <TradeText x="1255" y="396" $c="#d8d820">1.2516</TradeText>
    <TradeText x="880" y="347" $c="#1a2a90">Grid Base</TradeText>

    {fibLabels.map(([x, y, t]) => <FibText key={t} x={x} y={y}>{t}</FibText>)}
    <FibText x="814" y="130" $c="#70e0e0">0.618</FibText>
    <FibText x="814" y="241" $c="#70e0e0">0.382</FibText>
    <FibText x="813" y="425" $c="#70e0e0">1.2502</FibText>

    <ArrowShape>
      <path d="M660 212l20 2M686 215l20 1.500M714 217l20 2" stroke="#3ce03c" strokeWidth="5" strokeLinecap="round" fill="none"/>
      <path d="M740 219l18 1-1-8 24 11-26 9 1-8-16-1z" fill="#3ce03c"/>
      <path d="M1101 326l12-14M1118 306l14-16" stroke="#3ce03c" strokeWidth="5" strokeLinecap="round" fill="none"/>
      <path d="M1134 283l10-11" stroke="#3ce03c" strokeWidth="7" fill="none"/>
      <path d="M1157 256l-20 9 15 13z" fill="#3ce03c"/>
    </ArrowShape>
    {Array.from({length: 39}, (_, i) => (
      <Rule key={i} x1={i % 5 === 0 ? 1290 : 1292.5} x2="1295" y1={73 + i * 13.3} y2={73 + i * 13.3} $c="#26383a"/>
    ))}
  </ChartSvg>
);

const PriceAxis = () => (
  <AxisSvg viewBox="1295 54 37 508">
    <Rule x1="1295.500" x2="1295.500" y1="54" y2="562" $c="#26383a"/>
    <rect x="1298" y="55" width="33" height="5.500" fill="#10107c"/>
    <AxisLabel x="1330" y="58" $c="#e0e0ff" $s={6}>INDEX</AxisLabel>
    {plainPrices.map(([y, t]) => <AxisLabel key={t} x="1330" y={y}>{t}</AxisLabel>)}
    {priceTags.map((p) => (
      <g key={p.t}>
        <rect x="1296" y={p.y - 3.500} width="35" height="7" fill={p.bg} stroke="#111" strokeWidth=".5"/>
        <AxisLabel x="1330" y={p.y} $c={p.fg}>{p.t}</AxisLabel>
      </g>
    ))}
    <rect x="1296" y="304" width="36" height="11" fill="#000"/>
    <path d="M1297 312l2-4 2 4z" fill="#eee"/>
    <AxisLabel x="1330" y="310.500" $c="#fff">1.2582</AxisLabel>
  </AxisSvg>
);

const MacdChart = () => (
  <ChartSvg viewBox="0 563 1295 118">
    <Rule x1="1.500" x2="1.500" y1="563" y2="681" $c="#2a3a3a"/>
    {verticals.map(([x, c]) => <Rule key={x} x1={x} x2={x} y1="563" y2="565" $c={c}/>)}
    <Rule x1="2" x2="1295" y1="622" y2="622" $c="#c4d0d0" $w={1.3}/>
    {macdBars.map(([k, v], i) => (
      <MacdBar key={i} $k={k} x={candleX(i) - 1.8} width="3.600" y={v < 0 ? 622 + v : 622} height={Math.abs(v)}/>
    ))}
    <Curve d={linePath(signalLine)} $c="#c82828" $w={1}/>
    <ArrowShape>
      <path d="M1112 611l15-9" stroke="#3ce03c" strokeWidth="6" strokeLinecap="round" fill="none"/>
      <path d="M1152 585l-22 3 5 5-3 2 8 9z" fill="#3ce03c"/>
    </ArrowShape>
    {Array.from({length: 22}, (_, i) => (
      <Rule key={i} x1={i % 5 === 0 ? 1290 : 1292.5} x2="1295" y1={570 + i * 5.150} y2={570 + i * 5.150} $c="#26383a"/>
    ))}
  </ChartSvg>
);

const MacdAxis = () => (
  <AxisSvg viewBox="1295 563 37 118">
    <Rule x1="1295.500" x2="1295.500" y1="563" y2="681" $c="#26383a"/>
    {macdScale.map(([y, t]) => <AxisLabel key={t} x="1330" y={y}>{t}</AxisLabel>)}
    <rect x="1296" y="608" width="36" height="2.500" fill="#0000e0"/>
    <rect x="1296" y="610.500" width="36" height="8" fill="#f80000"/>
    <AxisLabel x="1330" y="614.500" $c="#300000">0.0003</AxisLabel>
  </AxisSvg>
);

export default function App() {
  return (
    <Screen>
      <GlobalStyle/>
      <TitleBar>
        <AppLogo viewBox="0 0 11 13">
          <rect width="11" height="13" fill="#111"/>
          <path d="M2 2l7 9M9 2l-7 9" stroke="#eee" strokeWidth="1.800"/>
        </AppLogo>
        <TitleText>PATrader - GBP RF6 - [GBPUSD.F, 60 min - [FXCM] British Pound vs US Dollar]</TitleText>
        <WinButton><svg width="10" height="10"><path d="M1 5h8" stroke="#333"/></svg></WinButton>
        <WinButton><svg width="10" height="10"><path d="M1.500 3.500h6v6h-6zM3.500 3.500v-2h6v6h-2" fill="none" stroke="#333"/></svg></WinButton>
        <WinButton><svg width="10" height="10"><path d="M1 1l8 8M9 1l-8 8" stroke="#333"/></svg></WinButton>
      </TitleBar>
      <MenuBar>
        <MenuIcon viewBox="0 0 12 12">
          <rect width="12" height="12" fill="#c8d8c0"/>
          <path d="M1 9l3-3 2 2 5-6" fill="none" stroke="#2a6a2a"/>
          <path d="M1 11h10" stroke="#555"/>
        </MenuIcon>
        {menuItems.map((m) => <MenuItem key={m}>{m}</MenuItem>)}
        <MdiButtons>
          <MdiButton>–</MdiButton>
          <MdiButton>❐</MdiButton>
          <MdiButton>×</MdiButton>
        </MdiButtons>
      </MenuBar>
      <ToolBar>
        {toolIcons.map((ic, i) => <ToolIcon key={i}>{ic}</ToolIcon>)}
        <ToolSep/>
        <ToolIcon>{chartIcon}</ToolIcon>
        <ToolSep/>
        <ToolIcon>{crossIcon}</ToolIcon>
        <ToolSep/>
        {drawIcons.map((ic, i) => <ToolIcon key={i}>{ic}</ToolIcon>)}
        <ToolSep $m={1}/>
        <ToolIcon>{brushIcon}</ToolIcon>
        <ToolGroupGap/>
        {timeframes.map((t) => <ToolCell key={t}>{t}</ToolCell>)}
        <ToolSep/>
        <ToolLetter>D</ToolLetter>
        <ToolLetter>W</ToolLetter>
        <ToolLetter>M</ToolLetter>
        <ToolSep $m={4}/>
        <ToolIcon>{clockIcon}</ToolIcon>
      </ToolBar>

      <Pane $h={508}>
        <PlotArea>
          <PriceChart/>
          <LockedNote>Locked</LockedNote>
          <InfoBox>
            <InfoHead>06/12/2023 07:00</InfoHead>
            <div>Open: 1.2590</div>
            <div>High: 1.2605</div>
            <div>Low: 1.2586</div>
            <div>Close: 1.2599</div>
            <div>Vol.: 9271</div>
          </InfoBox>
        </PlotArea>
        <PriceAxis/>
      </Pane>
      <PaneRule/>
      <Pane $h={118}>
        <PlotArea>
          <MacdChart/>
          <MacdTag>MACD</MacdTag>
        </PlotArea>
        <MacdAxis/>
      </Pane>
      <TimeRow>
        <TimePlot>
          <ChartSvg viewBox="0 681 1295 10">
            {sessionStrip.map(([a, b, c]) => <Rule key={a} x1={a} x2={b} y1="681" y2="681" $c={c} $w={2}/>)}
            {timeLabels.filter((l) => l[2]).map(([x]) => <Rule key={x} x1={x - 1} x2={x - 1} y1="681" y2="691" $c="#1c2c2c"/>)}
            {timeLabels.map(([x, t]) => <TimeText key={t} x={x} y="690">{t}</TimeText>)}
          </ChartSvg>
          <BlankCorner/>
        </TimePlot>
        <CornerButtons>
          <CornerButton $c="#3a20b8"><CornerGlyph/></CornerButton>
          <CornerButton $c="#b82020"><CornerGlyph/></CornerButton>
        </CornerButtons>
      </TimeRow>
      <TabBar>
        {tabs.map(([name, w, active], i) => (
          <Tab key={name} $w={w} $active={active} $plain={i === 6}>{name}</Tab>
        ))}
        <TabArrows><span>◁</span><span>▷</span></TabArrows>
      </TabBar>
      <StatusBar>
        <ReadyText>Ready</ReadyText>
        <StatusCell $w={82} $pad={5} $line>
          <svg width="10" height="8" viewBox="0 0 10 8" style={{marginRight: 12}}>
            <rect x=".5" y=".5" width="9" height="7" fill="#e8e8e8" stroke="#999"/>
            <path d="M.5.5l4.500 4 4.500-4" fill="none" stroke="#999"/>
          </svg>
          0 message(s)
        </StatusCell>
        <StatusCell $w={133} $pad={13}>Sent: 288 Kb/Recv: 10230 Kb</StatusCell>
        <StatusCell $w={93} $pad={4} $line>Connected/35 ms</StatusCell>
        <StatusCell $w={17}><LedBox><Led/></LedBox></StatusCell>
        <StatusCell $w={85}>12/12/2023 13:38 GMT</StatusCell>
        <StatusCell $w={89} $pad={1} $tight>12/12/2023 07:38:48 Local</StatusCell>
        <StatusCell $w={14}>
          <svg width="13" height="12" viewBox="0 0 13 12">
            <rect width="13" height="12" fill="#000"/>
            <path d="M6.500 1.500l5 9.500h-10z" fill="none" stroke="#bbb"/>
            <path d="M6.500 4v5" stroke="#bbb"/>
          </svg>
        </StatusCell>
      </StatusBar>
      <TaskBar>
        {taskbarIcons.map((name, i) => (
          <TaskSlot key={i} $active={i === 8} $open={openIcons.includes(i) || i === 8}>
            <TaskSvg viewBox="0 0 18 18">{taskIconArt[name]}</TaskSvg>
          </TaskSlot>
        ))}
        <Clock>
          <span>7:38 AM</span>
          <span>12/12/2023</span>
        </Clock>
      </TaskBar>
      <CursorOverlay viewBox="0 0 16 22">
        <path d="M1.500 1v16l4-3.500 3 6.500 3-1.500-3-6h5.500z" fill="#fff" stroke="#222" strokeWidth="1.200"/>
      </CursorOverlay>
    </Screen>
  );
}
